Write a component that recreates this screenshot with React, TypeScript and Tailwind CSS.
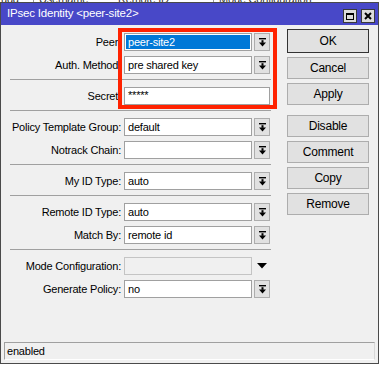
import React from "react";

const FONT = { fontFamily: '"Liberation Sans", Arial, sans-serif' };

function DropIcon() {
  return (
    <svg width="9" height="9" viewBox="0 0 9 9">
      <rect x="1" y="0" width="7" height="1.4" fill="#000" />
      <rect x="3.5" y="2.2" width="2" height="2.6" fill="#000" />
      <polygon points="1,4.6 8,4.6 4.5,8.4" fill="#000" />
    </svg>
  );
}

function Combo({ value, selected }: { value: string; selected?: boolean }) {
  return (
    <div className="flex items-center gap-[2px]">
      <div className="w-[128px] h-[18px] border border-[#a0a0a0] bg-white p-[1px]">
        <div
          className={
            selected
              ? "h-full bg-[#0078d7] text-white pl-[2px] leading-[14px]"
              : "h-full pl-[2px] leading-[14px] text-black"
          }
        >
          {value}
        </div>
      </div>
      <div className="w-[16px] h-[18px] border border-[#adadad] bg-[#e1e1e1] flex items-center justify-center">
        <DropIcon />
      </div>
    </div>
  );
}

function Row({ label, children }: { label: string; children: React.ReactNode }) {
  return (
    <div className="flex items-center h-[18px]">
      <div className="w-[123px] pr-[3px] text-right whitespace-nowrap">{label}</div>
      {children}
    </div>
  );
}

function Sep() {
  return (
    <div className="h-[13px] pt-[5px]">
      <div className="ml-[9px] w-[261px] h-[1px] bg-[#a0a0a0]" />
    </div>
  );
}

function Btn({ label, primary }: { label: string; primary?: boolean }) {
  return (
    <div
      className={
        primary
          ? "h-[24px] border border-[#333333] bg-[#e1e1e1] flex items-center justify-center text-[12px]"
          : "h-[22px] border border-[#adadad] bg-[#e1e1e1] flex items-center justify-center text-[12px]"
      }
    >
      {label}
    </div>
  );
}

export default function App() {
  return (
    <div
      className="relative w-[379px] h-[365px] bg-white overflow-hidden text-[11px] tracking-[-0.2px] text-black"
      style={FONT}
    >
      {/* window behind */}
      <div className="absolute top-0 left-0 w-full h-[3px] overflow-hidden">
        <div className="flex -mt-[9px] text-[11px] text-[#333]">
          <span className="w-[33px] pl-[1px]">udd</span>
          <span className="w-[80px] pl-[5px] border-l border-[#999]">Username</span>
          <span className="w-[100px] pl-[5px]">Remote ID</span>
          <span className="pl-[5px] border-l border-[#999]">Mode Configuration</span>
        </div>
      </div>

      <div className="relative mt-[2px] h-[362px] border border-[#4a4a4a] flex flex-col bg-[#f0f0f0]">
        {/* title bar */}
        <div className="h-[22px] bg-[#4848c8] flex items-start">
          <div className="pl-[6px] pt-[4px] text-white text-[11.5px] leading-[13px]">
            IPsec Identity &lt;peer-site2&gt;
          </div>
          <div className="ml-auto flex gap-[4px] pt-[6px] pr-[3px]">
            <div className="w-[14px] h-[14px] border border-[#3a3a3a] bg-[#dcdcdc] flex items-center justify-center">
              <div className="w-[8px] h-[7px] border border-black border-t-2" />
            </div>
            <div className="w-[14px] h-[14px] border border-[#3a3a3a] bg-[#dcdcdc] flex items-center justify-center">
              <svg width="8" height="8" viewBox="0 0 8 8">
                <path d="M1 1 L7 7 M7 1 L1 7" stroke="#000" strokeWidth="2" />
              </svg>
            </div>
          </div>
        </div>

        {/* body */}
        <div className="flex-1 flex flex-col">
          <div className="flex">
            <div className="w-[272px] pt-[8px] flex flex-col">
              <div className="flex flex-col gap-[5px]">
                <Row label="Peer:">
                  <Combo value="peer-site2" selected />
                </Row>
                <Row label="Auth. Method:">
                  <Combo value="pre shared key" />
                </Row>
              </div>
              <Sep />
              <Row label="Secret:">
                <div className="w-[146px] h-[18px] border border-[#a0a0a0] bg-white pl-[3px] leading-[14px]">
                  *****
                </div>
              </Row>
              <Sep />
              <div className="flex flex-col gap-[5px]">
                <Row label="Policy Template Group:">
                  <Combo value="default" />
                </Row>
                <Row label="Notrack Chain:">
                  <Combo value="" />
                </Row>
              </div>
              <Sep />
              <Row label="My ID Type:">
                <Combo value="auto" />
              </Row>
              <Sep />
              <div className="flex flex-col gap-[5px]">
                <Row label="Remote ID Type:">
                  <Combo value="auto" />
                </Row>
                <Row label="Match By:">
                  <Combo value="remote id" />
                </Row>
              </div>
              <Sep />
              <div className="flex flex-col gap-[5px]">
                <Row label="Mode Configuration:">
                  <div className="flex items-center gap-[2px]">
                    <div className="w-[128px] h-[18px] border border-[#c4c4c4] bg-[#f0f0f0]" />
                    <div className="w-[16px] h-[18px] flex items-center justify-center">
                      <svg width="10" height="6" viewBox="0 0 10 6">
                        <polygon points="0,0 10,0 5,5.5" fill="#000" />
                      </svg>
                    </div>
                  </div>
                </Row>
                <Row label="Generate Policy:">
                  <Combo value="no" />
                </Row>
              </div>
            </div>

            <div className="ml-[14px] w-[82px] pt-[4px] flex flex-col">
              <div className="flex flex-col gap-[4px]">
                <Btn label="OK" primary />
                <Btn label="Cancel" />
                <Btn label="Apply" />
              </div>
              <div className="mt-[10px] flex flex-col gap-[4px]">
                <Btn label="Disable" />
                <Btn label="Comment" />
                <Btn label="Copy" />
                <Btn label="Remove" />
              </div>
            </div>
          </div>

          <div className="mt-auto ml-[3px] mr-[3px] mb-[3px] h-[18px] border border-t-[#a0a0a0] border-l-[#a0a0a0] border-b-[#ffffff] border-r-[#d8d8d8] pl-[2px] leading-[16px]">
            enabled
          </div>
        </div>
      </div>

      {/* highlight overlay */}
      <div className="absolute left-[118px] top-[28px] w-[159px] h-[81px] border-4 border-[#ff2200]" />
    </div>
  );
}
